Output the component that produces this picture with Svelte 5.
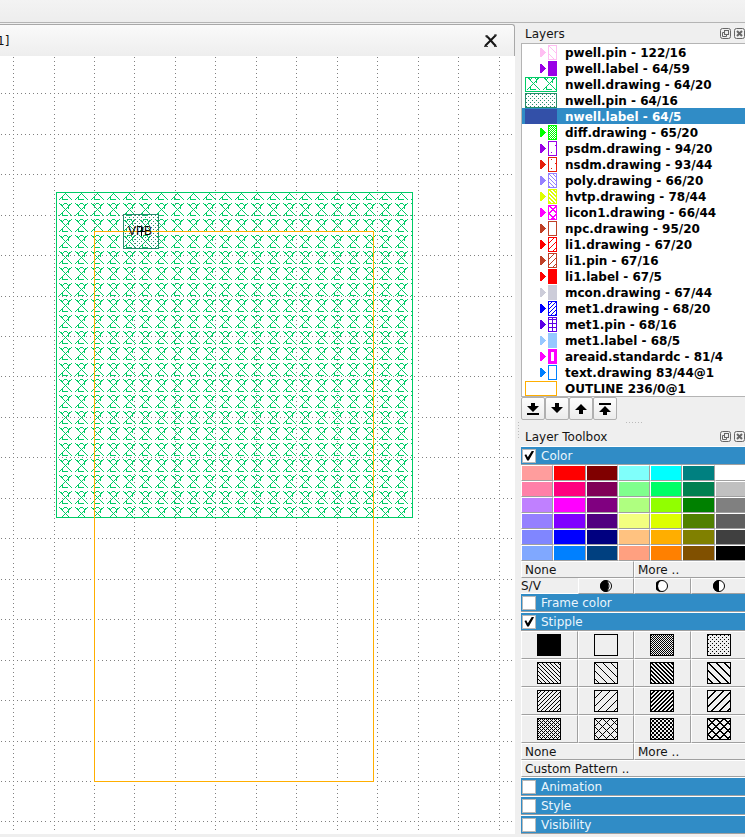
<script>
  // Builds a path of single pixels for every (x, y) that passes the test
  function pixels(w, h, test, ox = 0, oy = 0) {
    let d = '';
    for (let y = 0; y < h; y++)
      for (let x = 0; x < w; x++) if (test(x, y)) d += `M${x + ox} ${y + oy}h1v1h-1z`;
    return d;
  }

  const back = (n, t) => (x, y) => (x - y + 64 * n) % n < t;
  const fwd = (n, t) => (x, y) => (x + y) % n < t;
  const both = (n, t) => (x, y) => back(n, t)(x, y) || fwd(n, t)(x, y);
  const dots = (x, y) => (x % 4 === 1 && y % 4 === 1) || (x % 4 === 3 && y % 4 === 3);
  const solid = () => true;
  const none = () => false;

  const wellRows = [
    'X....XXX....X', '.XX.X...X.XX.', '..XX.....XX..', '...X.....X...', '....X...XX...',
    '.....X.X.X...', '......X......', '.....X.X.....', '....X...X....', '...X.....X...',
    '..XX......X..', '.X.X.......X.', 'X..XXXXXX...X'
  ];
  const well = (x, y) => wellRows[y % 16]?.[x % 16] === 'X';

  const layers = [
    ['pwell.pin - 122/16', '#ffbff2', back(8, 1)],
    ['pwell.label - 64/59', '#9900e6', solid],
    ['nwell.drawing - 64/20', '#00cc66', (x, y) => well(x + 14, y), true],
    ['nwell.pin - 64/16', '#268c6b', dots, true],
    ['nwell.label - 64/5', '#3350a8', solid, true],
    ['diff.drawing - 65/20', '#00ff00', (x, y) => (x + y) % 2 === 0],
    ['psdm.drawing - 94/20', '#9900e6', (x, y) => (x === 3 && y === 11) || (x === 7 && y === 4)],
    ['nsdm.drawing - 93/44', '#e61f0d', (x, y) => (x === 3 && y % 9 === 2) || (x === 7 && y === 6)],
    ['poly.drawing - 66/20', '#9580ff', back(4, 1)],
    ['hvtp.drawing - 78/44', '#ddff00', back(4, 2)],
    ['licon1.drawing - 66/44', '#ff00ff', both(8, 2)],
    ['npc.drawing - 95/20', '#bf4026', none],
    ['li1.drawing - 67/20', '#ff0000', fwd(6, 1)],
    ['li1.pin - 67/16', '#bf4026', fwd(6, 1)],
    ['li1.label - 67/5', '#ff0000', solid],
    ['mcon.drawing - 67/44', '#ccccd9', solid],
    ['met1.drawing - 68/20', '#0000ff', fwd(4, 1)],
    ['met1.pin - 68/16', '#5e00e6', (x, y) => x % 4 === 0 || y % 4 === 2],
    ['met1.label - 68/5', '#96c8ff', solid],
    ['areaid.standardc - 81/4', '#ff00ff', (x, y) => x < 3 || x > 5 || y < 3 || y > 11],
    ['text.drawing 83/44@1', '#0080ff', none],
    ['OUTLINE 236/0@1', '#ffae00', none, true]
  ];
  let selected = $state(4);

  const palette = [
    '#ff9d9d', '#ff0000', '#800000', '#80fffb', '#00ffff', '#008080', '#ffffff',
    '#ff80a8', '#ff0080', '#800057', '#80ff8d', '#00ff66', '#008050', '#c0c0c0',
    '#c080ff', '#ff00ff', '#800080', '#afff80', '#91ff00', '#008000', '#808080',
    '#9580ff', '#8000ff', '#500080', '#f3ff80', '#ddff00', '#508000', '#5f5f5f',
    '#8086ff', '#0000ff', '#000080', '#ffc280', '#ffae00', '#808000', '#404040',
    '#80a8ff', '#0080ff', '#004080', '#ffa080', '#ff8000', '#805000', '#000000'
  ];

  const stipples = [
    ['Solid', solid], ['Hollow', none], ['Dithered', (x, y) => (x + y) % 2 === 0], ['Dotted', dots],
    ['Left hatched', back(4, 1)], ['Wide left hatched', back(8, 1)],
    ['Thick left hatched', back(4, 2)], ['Wide thick left hatched', back(8, 2)],
    ['Right hatched', fwd(4, 1)], ['Wide right hatched', fwd(8, 1)],
    ['Thick right hatched', fwd(4, 2)], ['Wide thick right hatched', fwd(8, 2)],
    ['Cross hatched', both(4, 1)], ['Wide cross hatched', both(8, 1)],
    ['Checkerboard', (x, y) => ((x >> 1) + (y >> 1)) % 2 === 0], ['Wide thick cross hatched', both(8, 2)]
  ];

  const arrows = [
    ['Move to bottom', 'M5 2h4v3h4l-6 6-6-6h4zM1 12h12v2h-12z'],
    ['Move down', 'M5 2h4v4h4l-6 6-6-6h4z'],
    ['Move up', 'M5 13h4v-4h4l-6-6-6 6h4z'],
    ['Move to top', 'M5 14h4v-3h4l-6-6-6 6h4zM1 2h12v2h-12z']
  ];

  // Grid lines lie 40.45 px apart, with ten dots to each step
  const step = 40.45;
  const X0 = 13.6, Y0 = 37.8;
  let grid = '';
  for (let i = 0; i < 50; i++)
    for (let j = -10; j < 520; j++) {
      const gx = Math.floor(X0 + i * step), dx = Math.floor(X0 + (j * step) / 10);
      const gy = Math.floor(Y0 + i * step), dy = Math.floor(Y0 + (j * step) / 10);
      if (dx >= 0) grid += `M${dx} ${gy}h1v1h-1z`;
      if (dy >= 0) grid += `M${gx} ${dy}h1v1h-1z`;
    }
</script>

{#snippet winButtons()}
  <span class="win">
    <button aria-label="Float">
      <svg width="11" height="11"><rect x=".5" y=".5" width="10" height="10" rx="2" /><rect x="4.500" y="2.500" width="4" height="4" /><path d="M4 4.500H2.500V8.500H6.500V7" /></svg>
    </button>
    <button aria-label="Close">
      <svg width="11" height="11"><rect x=".5" y=".5" width="10" height="10" rx="2" /><path stroke-width="2" d="M3 3l5 5M8 3l-5 5" /></svg>
    </button>
  </span>
{/snippet}

{#snippet section(name, on)}
  <label class="section"><input type="checkbox" checked={on} /><span>{name}</span></label>
{/snippet}

<div class="app">
  <div class="toolbar"></div>
  <div class="body">
    <main>
      <div class="tab">
        <span>1]</span>
        <button aria-label="Close view">
          <svg width="14" height="14"><path d="M2 2c3 1 6 7 10 10M12 1C9 4 5 8 1 12" fill="none" stroke="#151515" stroke-width="2" /><path d="M1 2h3M10 1h3M0 12.500h4M10 12.500h3" stroke="#444" /></svg>
        </button>
      </div>
      <svg class="canvas" shape-rendering="crispEdges">
        <defs>
          <pattern id="well" x="59" y="147" width="16" height="16" patternUnits="userSpaceOnUse">
            <path d={pixels(16, 16, well)} fill="#00cc66" />
          </pattern>
          <pattern id="pin" width="4" height="4" patternUnits="userSpaceOnUse">
            <path d={pixels(4, 4, dots)} fill="#268c6b" />
          </pattern>
        </defs>
        <path d={grid} fill="#808080" />
        <rect x="56.500" y="136.500" width="356" height="325" fill="url(#well)" stroke="#00cc66" />
        <rect x="123.500" y="158.500" width="35" height="34" fill="url(#pin)" stroke="#268c6b" />
        <rect x="94.500" y="175.500" width="279" height="550" fill="none" stroke="#ffae00" />
        <path d="M138 175.500h7M141.500 171v9" stroke="#000" />
        <text x="128" y="179">VPB</text>
      </svg>
    </main>
    <div class="splitter"></div>
    <aside>
      <div class="stack">
        <header><h2>Layers</h2>{@render winButtons()}</header>
        <ul>
          {#each layers as [name, color, test, wide], i}
            <li>
              <button class:selected={selected === i} onclick={() => (selected = i)}>
                <svg width="32" height="15" shape-rendering="crispEdges">
                  {#if wide}
                    <rect x=".5" y=".5" width="31" height="14" fill={i === 4 ? color : '#fff'} stroke={color} />
                    <path d={pixels(32, 15, test)} fill={color} />
                  {:else}
                    <path d="M15 3h1l4.500 4.500-4.500 4.500h-1z" fill={color} />
                    <rect x="23.500" y=".5" width="8" height="14" fill="#fff" stroke={color} />
                    <path d={pixels(9, 15, test, 23)} fill={color} />
                  {/if}
                </svg>
                <span>{name}</span>
              </button>
            </li>
          {/each}
        </ul>
        <div class="moves">
          {#each arrows as [name, d]}
            <button aria-label={name}><svg width="14" height="15"><path {d} /></svg></button>
          {/each}
        </div>
        <div class="handle"></div>
        <header><h2>Layer Toolbox</h2>{@render winButtons()}</header>
        {@render section('Color', true)}
        <div class="palette">
          {#each palette as c}<button aria-label={c} style="background-color: {c}"></button>{/each}
        </div>
        <div class="two"><button>None</button><button>More ..</button></div>
        <div class="sv">
          <span>S/V</span>
          <button aria-label="Darker"><svg width="12" height="12"><circle cx="6" cy="6" r="5.500" /><path class="b" d="M6 0a6 6 0 0 0 0 12c3-1 3-11 0-12z" /><path d="M7 1q4 5 0 10" /></svg></button>
          <button aria-label="Brighter"><svg width="12" height="12"><circle cx="6" cy="6" r="5.500" /><path class="b" d="M5 0a6 6 0 0 0 0 12q-6-6 0-12z" /></svg></button>
          <button aria-label="Reset brightness"><svg width="12" height="12"><circle cx="6" cy="6" r="5.500" /><path class="b" d="M6 0a6 6 0 0 0 0 12z" /></svg></button>
        </div>
        {@render section('Frame color', false)}
        {@render section('Stipple', true)}
        <div class="stipples">
          {#each stipples as [name, test]}
            <button aria-label={name}>
              <svg width="24" height="22" shape-rendering="crispEdges">
                <rect x=".5" y=".5" width="23" height="21" fill="none" stroke="#000" />
                <path d={pixels(24, 22, test)} />
              </svg>
            </button>
          {/each}
        </div>
        <div class="two"><button>None</button><button>More ..</button></div>
        <div class="one"><button>Custom Pattern ..</button></div>
        {@render section('Animation', false)}
        {@render section('Style', false)}
        {@render section('Visibility', false)}
      </div>
    </aside>
  </div>
</div>

<style>
  :global(body) { background: #efefef; }
  .app {
    display: flex; flex-direction: column; min-height: 100vh; overflow: hidden;
    font: 12px/16px "DejaVu Sans", sans-serif; color: #141414; background: #efefef;
  }
  .app :global(*) { box-sizing: border-box; }
  button { font: inherit; color: inherit; background: none; border: 0; padding: 0; margin: 0; text-align: left; }
  svg { display: block; flex: none; }
  h2 { font: inherit; margin: 0; padding-top: 1px; }
  .toolbar { height: 23px; background: linear-gradient(#f3f3f3, #ededed); border-bottom: 1px solid #b4b4b4; }
  .body { flex: 1; display: flex; }
  main { flex: 1; min-width: 0; display: flex; flex-direction: column; padding: 1px 0 3px; }
  .tab {
    height: 32px; display: flex; align-items: center; justify-content: space-between;
    padding-right: 16px; border-top: 1px solid #a8a8a8; border-right: 1px solid #a8a8a8;
    border-top-right-radius: 3px; background: linear-gradient(#fafafa, #eeeeee);
  }
  .tab span { margin-left: -3px; }
  .canvas { flex: 1; width: 100%; background: #fff; }
  .canvas text { font: 12px "Liberation Sans", sans-serif; fill: #000; }
  .splitter {
    width: 6px;
    background: repeating-linear-gradient(#bbb 0 1px, transparent 1px 3px) 3px 50% / 1px 16px no-repeat;
  }
  aside { flex: 0 0 224px; overflow: hidden; }
  .stack { width: 226px; }
  header { display: flex; align-items: center; justify-content: space-between; height: 20px; padding: 0 2px 0 4px; }
  .win { display: flex; gap: 3px; }
  .win svg { fill: none; stroke: #666; }
  ul { list-style: none; margin: 0; padding: 0; background: #fff; border: 1px solid #b4b4b4; }
  li button {
    display: flex; align-items: center; gap: 8px; width: 100%; height: 16px; padding-left: 3px;
    font-weight: bold; color: #000; white-space: nowrap;
  }
  li span { padding-top: 2px; }
  li button.selected { background: #308cc6; color: #fff; }
  .moves { display: flex; }
  .moves button {
    width: 24px; height: 23px; display: grid; place-items: center;
    border: 1px solid #b0b0b0; border-radius: 2px; background: linear-gradient(#fdfdfd, #ececec);
  }
  .handle {
    height: 6px;
    background: repeating-linear-gradient(90deg, #bbb 0 1px, transparent 1px 3px) 50% 2px / 16px 1px no-repeat;
  }
  .section {
    display: flex; align-items: center; gap: 5px; height: 19px; padding-left: 1px;
    border-top: 1px solid #fff; border-bottom: 1px solid #a0a0a0; background: #308cc6; color: #eaf5fc;
  }
  .section input {
    appearance: none; width: 14px; height: 14px; margin: 0; background: #fff; border: 1px solid #b8b8b8;
    display: grid; place-items: center;
  }
  .section input:checked::before {
    content: ""; width: 10px; height: 10px; background: #000;
    clip-path: polygon(5% 45%, 22% 38%, 38% 68%, 80% 0, 100% 8%, 48% 100%, 32% 100%);
  }
  .palette { display: grid; grid-template-columns: repeat(7, 1fr); }
  .palette button { height: 16px; }
  .two, .sv, .stipples { display: grid; grid-template-columns: 1fr 1fr; }
  .sv, .stipples { grid-template-columns: repeat(4, 1fr); }
  .two button, .one button { width: 100%; height: 17px; padding: 1px 0 0 3px; line-height: 14px; }
  .palette button, .two button, .one button, .sv button, .stipples button {
    border: solid; border-width: 1px; border-color: #fff #a0a0a0 #a0a0a0 #fff;
  }
  .sv { height: 15px; line-height: 16px; }
  .sv button, .stipples button { display: grid; place-items: center; }
  .sv svg { fill: #fff; stroke: #000; }
  .sv path { fill: none; }
  .sv .b { fill: #000; stroke: none; }
  .stipples button { height: 28px; }
</style>
